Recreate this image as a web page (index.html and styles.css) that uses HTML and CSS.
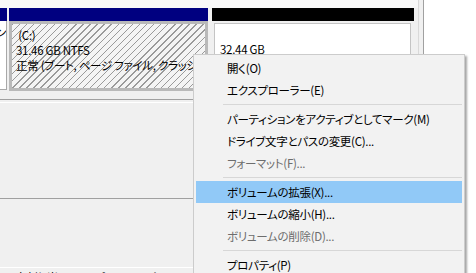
FILE: index.html
```html
<!DOCTYPE html>
<html lang="ja">
<head>
    <meta charset="UTF-8">
    <title>ディスクの管理</title>
    <link rel="stylesheet" href="styles.css">
</head>
<body>
    <div class="screen">
        <div class="disks">
            <div class="disk-row">
                <div class="part part-edge">
                    <div class="part-bar primary"></div>
                    <div class="part-body">
                        <div class="part-box">
                            <div class="part-text">回復パーティション</div>
                        </div>
                    </div>
                </div>
                <div class="part part-c">
                    <div class="part-bar primary"></div>
                    <div class="part-body">
                        <div class="part-box hatched">
                            <div class="part-text">&nbsp;(C:)</div>
                            <div class="part-text">31.46 GB NTFS</div>
                            <div class="part-text">正常 (ブート, ページ ファイル, クラッシュ ダンプ, プライマリ パーティション)</div>
                        </div>
                    </div>
                </div>
                <div class="part part-free">
                    <div class="part-bar unallocated"></div>
                    <div class="part-body">
                        <div class="part-box">
                            <div class="part-text">&nbsp;</div>
                            <div class="part-text">32.44 GB</div>
                            <div class="part-text">未割り当て</div>
                        </div>
                    </div>
                </div>
            </div>
            <div class="disk-row empty"></div>
            <div class="disk-row short"></div>
            <div class="legend">
                <span class="swatch"></span>未割り当て
                <span class="swatch blue"></span>プライマリ パーティション
            </div>
        </div>
        <div class="gutter"></div>
        <div class="pane"></div>

        <ul class="menu">
            <li class="menu-item">開く(O)</li>
            <li class="menu-item">エクスプローラー(E)</li>
            <li class="menu-sep"></li>
            <li class="menu-item">パーティションをアクティブとしてマーク(M)</li>
            <li class="menu-item">ドライブ文字とパスの変更(C)...</li>
            <li class="menu-item disabled">フォーマット(F)...</li>
            <li class="menu-sep"></li>
            <li class="menu-item active">ボリュームの拡張(X)...</li>
            <li class="menu-item">ボリュームの縮小(H)...</li>
            <li class="menu-item disabled">ボリュームの削除(D)...</li>
            <li class="menu-sep"></li>
            <li class="menu-item">プロパティ(P)</li>
        </ul>
    </div>
</body>
</html>
```

FILE: styles.css
```css
body {
    margin: 0;
    padding: 0;
    background-color: #fff;
    font-family: "Noto Sans CJK JP", sans-serif;
    font-size: 11.5px;
    letter-spacing: -0.3px;
    font-feature-settings: "palt";
    color: #000;
}

.screen {
    position: relative;
    display: flex;
    height: 273px;
    overflow: hidden;
}

.disks {
    width: 418px;
    flex-shrink: 0;
    background-color: #f0f0f0;
    border-right: 1px solid #d9d9d9;
    display: flex;
    flex-direction: column;
}

.gutter {
    width: 4px;
    background-color: #f0f0f0;
    border-right: 1px solid #a0a0a0;
}

.pane {
    flex: 1;
    background-color: #fff;
}

.disk-row {
    box-sizing: border-box;
    flex-shrink: 0;
    height: 100px;
    padding-top: 8px;
    border-bottom: 1px solid #a0a0a0;
    display: flex;
    background: linear-gradient(#f8f8f8 0 8px, #f0f0f0 8px);
}

.disk-row.empty {
    height: 97px;
    margin-top: 2px;
    border-top: 1px solid #fff;
    background: #f0f0f0;
}

.disk-row.short {
    height: 69px;
    padding: 0;
    border-bottom: 1px solid #fff;
    background: #f0f0f0;
}

.part {
    display: flex;
    flex-direction: column;
    flex-shrink: 0;
}

.part-bar {
    height: 13px;
}

.part-bar.primary {
    background-color: #000080;
}

.part-bar.unallocated {
    background-color: #000;
}

.part-body {
    box-sizing: border-box;
    height: 70px;
}

.part-box {
    box-sizing: border-box;
    height: 100%;
    padding: 4px 0 0 4px;
    overflow: hidden;
    background-color: #fff;
}

.part-text {
    height: 15px;
    line-height: 15px;
    white-space: nowrap;
}

.part-edge {
    width: 7px;
    margin-right: 2px;
}

.part-edge .part-box {
    height: 69px;
    padding: 4px 0 0 0;
    border-right: 1px solid #a8a8a8;
    border-bottom: 1px solid #a8a8a8;
    direction: rtl;
}

.part-c {
    width: 199px;
    margin-right: 4px;
}

.part-c .part-body {
    border: 3px solid #b9b9b9;
}

.hatched {
    background: repeating-linear-gradient(135deg, #9a9a9a 0 1px, #f4f4f4 1px 5px);
}

.part-free {
    width: 202px;
}

.part-free .part-body {
    padding: 2px 3px 2px 2px;
}

.part-free .part-box {
    border: 1px solid #c4c4c4;
    padding-left: 5px;
    padding-top: 3px;
}

.legend {
    padding: 2px 0 0 1px;
    white-space: nowrap;
    line-height: 15px;
}

.swatch {
    display: inline-block;
    width: 8px;
    height: 8px;
    margin-right: 6px;
    background-color: #000;
}

.swatch.blue {
    margin-left: 10px;
    background-color: #000080;
}

.menu {
    position: absolute;
    left: 193px;
    top: 54px;
    width: 266px;
    margin: 0;
    padding: 2px;
    list-style: none;
    background-color: #f2f2f2;
    border: 1px solid #cccccc;
    box-shadow: 2px 2px 2px rgba(0, 0, 0, 0.35);
}

.menu-item {
    height: 22px;
    line-height: 22px;
    padding-left: 31px;
    white-space: nowrap;
}

.menu-item.active {
    background-color: #91c9f7;
}

.menu-item.disabled {
    color: #6d6d6d;
}

.menu-sep {
    height: 1px;
    margin: 3px 0 3px 27px;
    background-color: #d7d7d7;
}
```
